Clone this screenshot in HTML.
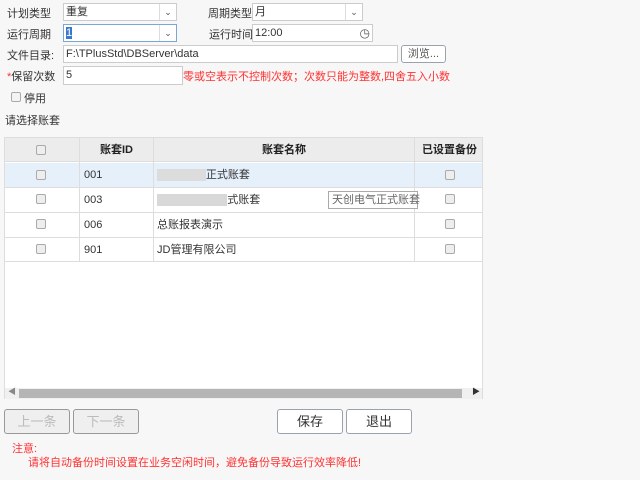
<!DOCTYPE html><html><head><meta charset="utf-8"><style>
*{box-sizing:border-box;margin:0;padding:0}
body{width:640px;height:480px;background:#f7f7f7;font-family:"Liberation Sans","Noto Sans CJK SC",sans-serif;font-size:11px;color:#333;position:relative;overflow:hidden}
.a{position:absolute;white-space:nowrap}
.inp{position:absolute;background:#fff;border:1px solid #ccc;height:18px;line-height:16px;padding-left:2px}
.arr{position:absolute;top:0;right:0;width:17px;height:16px;border-left:1px solid #ddd;text-align:center;font-size:9px;color:#555}
.btn{position:absolute;border:1px solid #9aa3ad;border-radius:3px;background:#fff;text-align:center;font-size:13px}
.cb{position:absolute;width:10px;height:10px;border:1px solid #aaa;border-radius:2px;background:#eee}
.td{position:absolute;line-height:25px}
</style></head><body>
<div class="a" style="left:7px;top:5px">计划类型</div>
<div class="inp" style="left:63px;top:3px;width:114px">重复<div class="arr">&#8964;</div></div>
<div class="a" style="left:208px;top:5px">周期类型</div>
<div class="inp" style="left:252px;top:3px;width:111px">月<div class="arr">&#8964;</div></div>
<div class="a" style="left:7px;top:26px">运行周期</div>
<div class="inp" style="left:63px;top:24px;width:114px;border-color:#7aa7d6"><span style="background:#3a78d0;color:#fff">1</span><div class="arr">&#8964;</div></div>
<div class="a" style="left:209px;top:26px">运行时间</div>
<div class="inp" style="left:252px;top:24px;width:121px">12:00<span class="a" style="right:2px;top:0;font-size:12px;color:#555">&#9719;</span></div>
<div class="a" style="left:7px;top:47px">文件目录:</div>
<div class="inp" style="left:63px;top:45px;width:335px">F:\TPlusStd\DBServer\data</div>
<div class="btn" style="left:401px;top:45px;width:45px;height:18px;font-size:11px;line-height:16px;color:#555">浏览...</div>
<div class="a" style="left:7px;top:68px"><span style="color:#f33">*</span>保留次数</div>
<div class="inp" style="left:63px;top:66px;width:120px;height:19px">5</div>
<div class="a" style="left:183px;top:68px;color:#f33">零或空表示不控制次数；次数只能为整数,四舍五入小数</div>
<div class="cb" style="left:11px;top:92px;background:#f3f3f3"></div>
<div class="a" style="left:24px;top:90px">停用</div>
<div class="a" style="left:5px;top:112px">请选择账套</div>
<div class="a" style="left:4px;top:137px;width:479px;height:262px;background:#fff;border:1px solid #ddd"></div>
<div class="a" style="left:5px;top:138px;width:477px;height:24px;background:#ececec;border-bottom:1px solid #ddd"></div>
<div class="a" style="left:5px;top:163px;width:477px;height:24px;background:#e6f0fb"></div>
<div class="a" style="left:5px;top:187px;width:477px;border-top:1px solid #ddd"></div>
<div class="a" style="left:5px;top:212px;width:477px;border-top:1px solid #ddd"></div>
<div class="a" style="left:5px;top:237px;width:477px;border-top:1px solid #ddd"></div>
<div class="a" style="left:5px;top:261px;width:477px;border-top:1px solid #ddd"></div>
<div class="a" style="left:79px;top:138px;height:124px;border-left:1px solid #ddd"></div>
<div class="a" style="left:153px;top:138px;height:124px;border-left:1px solid #ddd"></div>
<div class="a" style="left:414px;top:138px;height:124px;border-left:1px solid #ddd"></div>
<div class="cb" style="left:36px;top:145px"></div>
<div class="td" style="left:100px;top:138px;font-weight:bold;color:#222">账套ID</div>
<div class="td" style="left:262px;top:138px;font-weight:bold;color:#222">账套名称</div>
<div class="td" style="left:422px;top:138px;font-weight:bold;color:#222">已设置备份</div>
<div class="cb" style="left:36px;top:170px"></div><div class="td" style="left:84px;top:163px">001</div><div class="td" style="left:157px;top:163px"><span style="background:#dcdcdc">&nbsp;&nbsp;&nbsp;&nbsp;&nbsp;&nbsp;&nbsp;&nbsp;&nbsp;&nbsp;&nbsp;&nbsp;&nbsp;&nbsp;&nbsp;&nbsp;</span>正式账套</div><div class="cb" style="left:445px;top:170px"></div>
<div class="cb" style="left:36px;top:194px"></div><div class="td" style="left:84px;top:188px">003</div><div class="td" style="left:157px;top:188px"><span style="background:#d8d8d8">&nbsp;&nbsp;&nbsp;&nbsp;&nbsp;&nbsp;&nbsp;&nbsp;&nbsp;&nbsp;&nbsp;&nbsp;&nbsp;&nbsp;&nbsp;&nbsp;&nbsp;&nbsp;&nbsp;&nbsp;&nbsp;&nbsp;&nbsp;</span>式账套</div><div class="cb" style="left:445px;top:194px"></div>
<div class="a" style="left:328px;top:191px;width:90px;height:18px;background:#fff;border:1px solid #aaa;color:#666;line-height:16px;padding-left:3px">天创电气正式账套</div>
<div class="cb" style="left:36px;top:219px"></div><div class="td" style="left:84px;top:213px">006</div><div class="td" style="left:157px;top:213px">总账报表演示</div><div class="cb" style="left:445px;top:219px"></div>
<div class="cb" style="left:36px;top:244px"></div><div class="td" style="left:84px;top:238px">901</div><div class="td" style="left:157px;top:238px">JD管理有限公司</div><div class="cb" style="left:445px;top:244px"></div>
<div class="a" style="left:5px;top:388px;width:477px;height:11px;background:#f0f0f0"></div>
<div class="a" style="left:19px;top:389px;width:443px;height:9px;background:#b5b5b5"></div>
<div class="a" style="left:8px;top:386px;font-size:8px;color:#888">&#9664;</div>
<div class="a" style="left:472px;top:386px;font-size:8px;color:#333">&#9654;</div>
<div class="btn" style="left:4px;top:409px;width:66px;height:25px;line-height:23px;background:#efefef;border-color:#999;color:#bbb">上一条</div>
<div class="btn" style="left:73px;top:409px;width:66px;height:25px;line-height:23px;background:#efefef;border-color:#999;color:#bbb">下一条</div>
<div class="btn" style="left:277px;top:409px;width:66px;height:25px;line-height:23px">保存</div>
<div class="btn" style="left:346px;top:409px;width:66px;height:25px;line-height:23px">退出</div>
<div class="a" style="left:12px;top:440px;color:#f33">注意:</div>
<div class="a" style="left:28px;top:454px;color:#f33">请将自动备份时间设置在业务空闲时间，避免备份导致运行效率降低!</div>
</body></html>
